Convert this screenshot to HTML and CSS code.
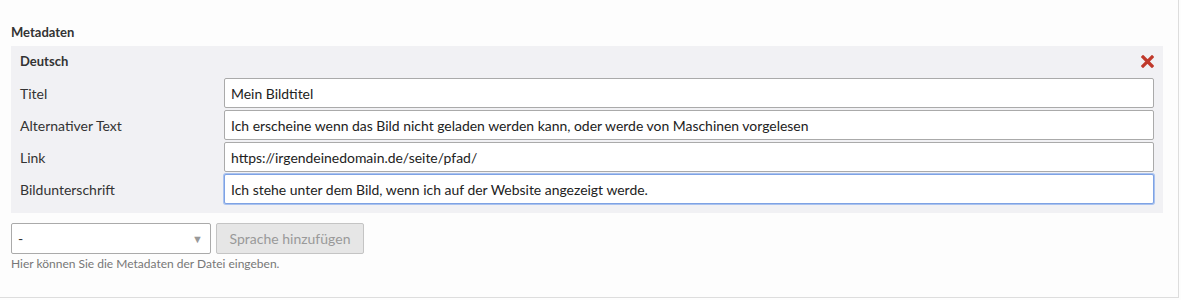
FILE: index.html
```html
<!DOCTYPE html>
<html lang="de">
<head>
    <meta charset="UTF-8">
    <title>Metadaten</title>
    <link rel="stylesheet" href="styles.css">
</head>
<body>
    <div class="page">
        <div class="field">
            <div class="field-label">Metadaten</div>
            <div class="lang-panel">
                <div class="lang-head">
                    <span class="lang-name">Deutsch</span>
                    <button class="remove" title="Entfernen">
                        <svg width="13" height="13" viewBox="0 0 13 13">
                            <path d="M2 2 L11 11 M11 2 L2 11" stroke="#c0392b" stroke-width="3.2" stroke-linecap="square"/>
                        </svg>
                    </button>
                </div>
                <div class="meta-row">
                    <label>Titel</label>
                    <input type="text" value="Mein Bildtitel">
                </div>
                <div class="meta-row">
                    <label>Alternativer Text</label>
                    <input type="text" value="Ich erscheine wenn das Bild nicht geladen werden kann, oder werde von Maschinen vorgelesen">
                </div>
                <div class="meta-row">
                    <label>Link</label>
                    <input type="text" value="https://irgendeinedomain.de/seite/pfad/">
                </div>
                <div class="meta-row">
                    <label>Bildunterschrift</label>
                    <input type="text" class="focused" value="Ich stehe unter dem Bild, wenn ich auf der Website angezeigt werde.">
                </div>
            </div>
            <div class="add-lang">
                <div class="select">
                    <span>-</span>
                    <span class="caret">&#9660;</span>
                </div>
                <button class="add-btn" disabled>Sprache hinzufügen</button>
            </div>
            <div class="help">Hier können Sie die Metadaten der Datei eingeben.</div>
        </div>
    </div>
</body>
</html>
```

FILE: styles.css
```css
* {
    margin: 0;
    padding: 0;
    box-sizing: border-box;
    font-family: 'Lato', sans-serif;
}

body {
    background: #fdfdfd;
    color: #333;
    font-size: 14px;
}

.page {
    width: 1179px;
    height: 298px;
    border-right: 1px solid #ddd;
    border-bottom: 1px solid #ddd;
    padding: 24px 15px 0 11px;
}

.field-label {
    font-weight: 700;
    font-size: 13px;
    line-height: 16px;
    margin-bottom: 6px;
}

.lang-panel {
    background: #f1f1f4;
    padding: 5px 9px 9px 9px;
}

.lang-head {
    display: flex;
    justify-content: space-between;
    align-items: center;
    height: 20px;
    margin-bottom: 7px;
}

.lang-name {
    font-weight: 700;
    font-size: 13px;
}

.remove {
    background: none;
    border: none;
    display: flex;
}

.meta-row {
    display: flex;
    align-items: center;
    margin-bottom: 2px;
}

.meta-row:last-child {
    margin-bottom: 0;
}

.meta-row label {
    width: 204px;
    flex-shrink: 0;
    font-size: 14px;
}

.meta-row input {
    flex: 1;
    height: 30px;
    border: 1px solid #aaa;
    border-radius: 2px;
    background: #fff;
    padding: 0 6px;
    font-size: 13.95px;
    color: #222;
}

.meta-row input.focused {
    border-color: #7ea2e4;
    box-shadow: 0 0 0 1px #a9c2ef;
    outline: none;
}

.add-lang {
    display: flex;
    gap: 5px;
    margin-top: 10px;
}

.select {
    width: 200px;
    height: 31px;
    border: 1px solid #aaa;
    border-radius: 2px;
    background: #fff;
    display: flex;
    justify-content: space-between;
    align-items: center;
    padding: 0 7px 0 6px;
    font-size: 14px;
}

.caret {
    color: #999;
    font-size: 11px;
}

.add-btn {
    width: 148px;
    height: 31px;
    border: 1px solid #c4c4c4;
    border-radius: 2px;
    background: #e6e6e6;
    color: #999;
    font-size: 14px;
}

.help {
    font-size: 12px;
    color: #777;
    margin-top: 2px;
}
```
